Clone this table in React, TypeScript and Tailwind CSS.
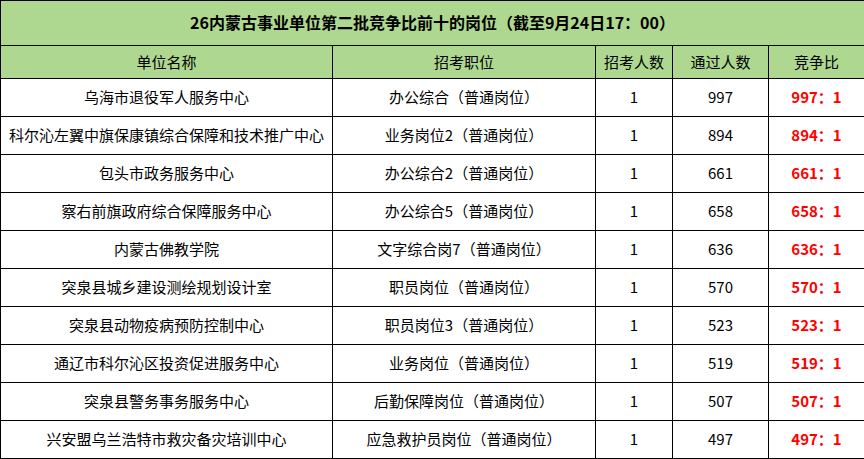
const rows = [
  ["乌海市退役军人服务中心", "办公综合（普通岗位）", "1", "997"],
  ["科尔沁左翼中旗保康镇综合保障和技术推广中心", "业务岗位2（普通岗位）", "1", "894"],
  ["包头市政务服务中心", "办公综合2（普通岗位）", "1", "661"],
  ["察右前旗政府综合保障服务中心", "办公综合5（普通岗位）", "1", "658"],
  ["内蒙古佛教学院", "文字综合岗7（普通岗位）", "1", "636"],
  ["突泉县城乡建设测绘规划设计室", "职员岗位（普通岗位）", "1", "570"],
  ["突泉县动物疫病预防控制中心", "职员岗位3（普通岗位）", "1", "523"],
  ["通辽市科尔沁区投资促进服务中心", "业务岗位（普通岗位）", "1", "519"],
  ["突泉县警务事务服务中心", "后勤保障岗位（普通岗位）", "1", "507"],
  ["兴安盟乌兰浩特市救灾备灾培训中心", "应急救护员岗位（普通岗位）", "1", "497"],
];

const font = { fontFamily: '"Noto Sans CJK SC", "Liberation Sans", sans-serif' };

export default function App() {
  return (
    <div className="w-[864px] h-[459px] bg-white" style={font}>
      <table className="table-fixed border-collapse w-[864px] text-[15px] text-black">
        <colgroup>
          <col className="w-[332px]" />
          <col className="w-[263px]" />
          <col className="w-[77px]" />
          <col className="w-[96px]" />
          <col className="w-[96px]" />
        </colgroup>
        <tbody>
          <tr className="h-[45px] bg-[#aed890]">
            <td colSpan={5} className="border border-black text-center font-bold text-[16px] pb-[2px]">
              26内蒙古事业单位第二批竞争比前十的岗位（截至9月24日17：00）
            </td>
          </tr>
          <tr className="h-[33px] bg-[#aed890]">
            {["单位名称", "招考职位", "招考人数", "通过人数", "竞争比"].map((h) => (
              <td key={h} className="border border-black text-center p-0">
                {h}
              </td>
            ))}
          </tr>
          {rows.map((r) => (
            <tr key={r[0]} className="h-[38px]">
              <td className="border border-black text-center p-0 whitespace-nowrap">{r[0]}</td>
              <td className="border border-black text-center p-0 whitespace-nowrap">{r[1]}</td>
              <td className="border border-black text-center p-0">{r[2]}</td>
              <td className="border border-black text-center p-0">{r[3]}</td>
              <td className="border border-black text-center p-0 font-bold text-[#ff0000]">
                {r[3]}：1
              </td>
            </tr>
          ))}
        </tbody>
      </table>
    </div>
  );
}
